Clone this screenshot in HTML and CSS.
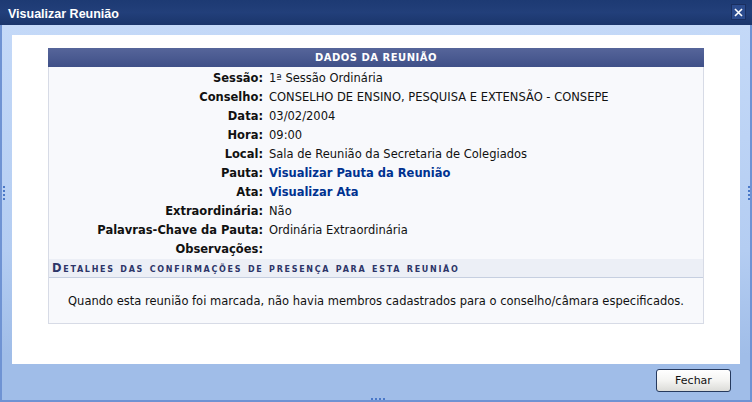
FILE: index.html
```html
<!DOCTYPE html>
<html lang="pt">
<head>
<meta charset="utf-8">
<title>Visualizar Reunião</title>
<link rel="stylesheet" href="styles.css">
</head>
<body>
<div class="win">
  <div class="titlebar">
    <span class="title">Visualizar Reunião</span>
    <span class="close"><svg width="9" height="9" viewBox="0 0 9 9"><path d="M1 1L8 8M8 1L1 8" stroke="#fff" stroke-width="1.6"/></svg></span>
  </div>
  <div class="frame">
    <div class="content">
      <div class="panel">
        <div class="panel-head">DADOS DA REUNIÃO</div>
        <div class="fields">
          <div class="lbl">Sessão:</div><div class="val">1ª Sessão Ordinária</div>
          <div class="lbl">Conselho:</div><div class="val">CONSELHO DE ENSINO, PESQUISA E EXTENSÃO - CONSEPE</div>
          <div class="lbl">Data:</div><div class="val">03/02/2004</div>
          <div class="lbl">Hora:</div><div class="val">09:00</div>
          <div class="lbl">Local:</div><div class="val">Sala de Reunião da Secretaria de Colegiados</div>
          <div class="lbl">Pauta:</div><div class="val"><a class="link" href="#">Visualizar Pauta da Reunião</a></div>
          <div class="lbl">Ata:</div><div class="val"><a class="link" href="#">Visualizar Ata</a></div>
          <div class="lbl">Extraordinária:</div><div class="val">Não</div>
          <div class="lbl">Palavras-Chave da Pauta:</div><div class="val">Ordinária Extraordinária</div>
          <div class="lbl">Observações:</div><div class="val"></div>
        </div>
        <div class="sub-head">Detalhes das confirmações de presença para esta reunião</div>
        <div class="msg">Quando esta reunião foi marcada, não havia membros cadastrados para o conselho/câmara especificados.</div>
      </div>
    </div>
    <div class="footer">
      <button class="btn" type="button">Fechar</button>
    </div>
    <span class="grip grip-left"></span>
    <span class="grip grip-right"></span>
    <span class="grip-bottom"></span>
    <span class="grip-corner"></span>
  </div>
</div>
</body>
</html>
```

FILE: styles.css
```css
html, body {
  margin: 0;
  padding: 0;
  background: #ffffff;
}
.win {
  width: 752px;
  height: 402px;
  display: flex;
  flex-direction: column;
  font-family: "DejaVu Sans", Verdana, sans-serif;
  font-size: 11.5px;
}
.titlebar {
  height: 25px;
  flex: none;
  display: flex;
  align-items: center;
  justify-content: space-between;
  padding: 0 6px 0 8px;
  background: linear-gradient(#1d3a73, #223f7a 50%, #1a356b);
  box-sizing: border-box;
}
.title {
  color: #ffffff;
  font-family: "Liberation Sans", Arial, sans-serif;
  font-weight: bold;
  font-size: 12.5px;
  position: relative;
  top: 1px;
}
.close {
  width: 13px;
  height: 14px;
  background: #2c4c8e;
  border: 1px solid #1a2f60;
  display: flex;
  align-items: center;
  justify-content: center;
  margin-top: -1px;
}
.frame {
  flex: 1;
  position: relative;
  display: flex;
  flex-direction: column;
  border-left: 2px solid #6f93d3;
  border-right: 2px solid #6f93d3;
  border-bottom: 2px solid #6f93d3;
  background: linear-gradient(#c4d9f8, #b4cdf2 60%, #a0bde8 88%, #a0bde8);
  padding-top: 10px;
}
.content {
  height: 329px;
  margin: 0 10px;
  background: #ffffff;
  padding: 13px 36px 0;
  box-sizing: border-box;
}
.panel {
  background: #f8f9fc;
  border: 1px solid #d7dbe6;
  border-top: none;
}
.panel-head {
  height: 19px;
  line-height: 20px;
  margin: 0 -1px;
  background: linear-gradient(#56659a, #3f5088);
  color: #ffffff;
  font-weight: bold;
  text-align: center;
  letter-spacing: 0.5px;
  font-size: 10px;
}
.fields {
  display: grid;
  grid-template-columns: 214px 1fr;
  grid-auto-rows: 19px;
  padding-top: 2px;
  color: #111111;
}
.lbl {
  font-weight: bold;
  text-align: right;
  line-height: 19px;
  white-space: nowrap;
}
.val {
  padding-left: 6px;
  line-height: 19px;
  white-space: nowrap;
}
.link {
  color: #003290;
  font-weight: bold;
  text-decoration: none;
}
.sub-head {
  height: 18px;
  line-height: 19px;
  background: #eceff6;
  border-bottom: 1px solid #c6cfe0;
  color: #2d3568;
  font-weight: bold;
  font-variant: small-caps;
  letter-spacing: 1.7px;
  padding-left: 3px;
  font-size: 11.5px;
  white-space: nowrap;
}
.msg {
  text-align: center;
  line-height: 14px;
  padding: 16px 0 15px;
  color: #111111;
  white-space: nowrap;
}
.footer {
  flex: 1;
  display: flex;
  justify-content: flex-end;
  align-items: flex-start;
  padding: 5px 19px 0 0;
}
.btn {
  width: 75px;
  height: 23px;
  border: 1px solid #263a5e;
  border-radius: 3px;
  background: linear-gradient(#ffffff, #f4f4f2 50%, #dcdcd8);
  font-family: "DejaVu Sans", Tahoma, sans-serif;
  font-size: 11px;
  color: #111111;
  padding: 0;
}
.grip {
  position: absolute;
  width: 2px;
  height: 14px;
  top: 161px;
  background: repeating-linear-gradient(#4a78c8 0 2px, transparent 2px 4px);
}
.grip-left { left: 1px; }
.grip-right { right: 0px; }
.grip-bottom {
  position: absolute;
  bottom: 0;
  left: 369px;
  width: 14px;
  height: 2px;
  background: repeating-linear-gradient(90deg, #4a78c8 0 2px, transparent 2px 4px);
}
.grip-corner {
  position: absolute;
  right: 0;
  bottom: 0;
  width: 4px;
  height: 4px;
  background: radial-gradient(circle, #4a78c8 40%, transparent 45%);
  background-size: 2px 2px;
}
```
